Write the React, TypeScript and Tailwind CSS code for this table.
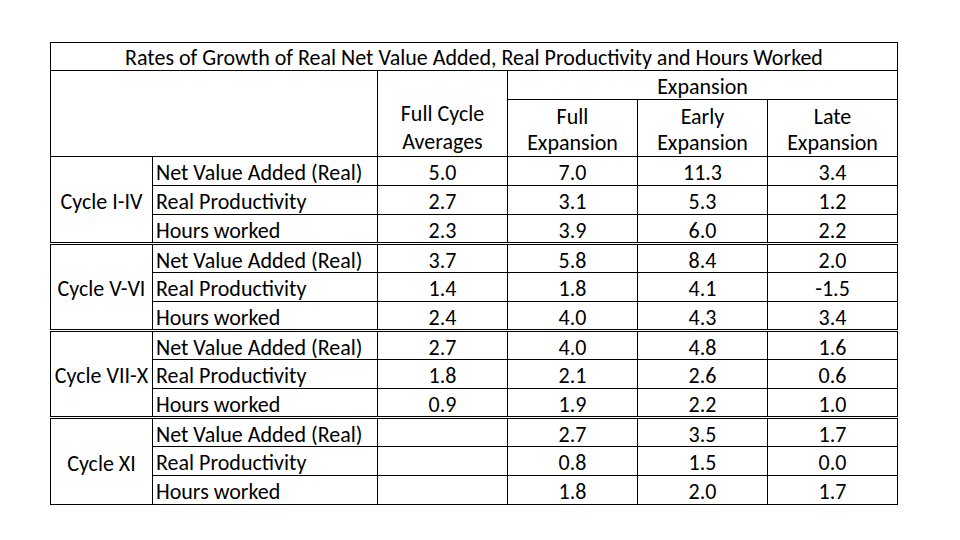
const groups = [
  {
    label: 'Cycle I-IV',
    rows: [
      ['Net Value Added (Real)', '5.0', '7.0', '11.3', '3.4'],
      ['Real Productivity', '2.7', '3.1', '5.3', '1.2'],
      ['Hours worked', '2.3', '3.9', '6.0', '2.2'],
    ],
  },
  {
    label: 'Cycle V-VI',
    rows: [
      ['Net Value Added (Real)', '3.7', '5.8', '8.4', '2.0'],
      ['Real Productivity', '1.4', '1.8', '4.1', '-1.5'],
      ['Hours worked', '2.4', '4.0', '4.3', '3.4'],
    ],
  },
  {
    label: 'Cycle VII-X',
    rows: [
      ['Net Value Added (Real)', '2.7', '4.0', '4.8', '1.6'],
      ['Real Productivity', '1.8', '2.1', '2.6', '0.6'],
      ['Hours worked', '0.9', '1.9', '2.2', '1.0'],
    ],
  },
  {
    label: 'Cycle XI',
    rows: [
      ['Net Value Added (Real)', '', '2.7', '3.5', '1.7'],
      ['Real Productivity', '', '0.8', '1.5', '0.0'],
      ['Hours worked', '', '1.8', '2.0', '1.7'],
    ],
  },
];

// double rule under the last row of every group except the final one
const DOUBLE = 'border border-black border-b-[3px] border-double';
const SINGLE = 'border border-black';

export default function App() {
  return (
    <div
      className="w-[960px] h-[540px] bg-white pt-[42px] pl-[50px] text-black"
      style={{ fontFamily: 'Carlito, Calibri, Lato, "Liberation Sans", sans-serif' }}
    >
      <table className="table-fixed border-collapse text-[22px] leading-none">
        <colgroup>
          <col className="w-[102px]" />
          <col className="w-[225px]" />
          <col className="w-[130px]" />
          <col className="w-[130px]" />
          <col className="w-[130px]" />
          <col className="w-[130px]" />
        </colgroup>
        <thead>
          <tr className="h-[28px]">
            <th colSpan={6} className="border border-black font-normal text-center pt-[3px]">
              Rates of Growth of Real Net Value Added, Real Productivity and Hours Worked
            </th>
          </tr>
          <tr className="h-[29px]">
            <th colSpan={2} rowSpan={2} className="border border-black font-normal" />
            <th rowSpan={2} className="border border-black font-normal align-bottom leading-[28px]">
              Full Cycle
              <br />
              Averages
            </th>
            <th colSpan={3} className="border border-black font-normal pt-[3px]">
              Expansion
            </th>
          </tr>
          <tr className="h-[56px]">
            <th className="border border-black font-normal leading-[26px] pt-[4px]">
              Full
              <br />
              Expansion
            </th>
            <th className="border border-black font-normal leading-[26px] pt-[4px]">
              Early
              <br />
              Expansion
            </th>
            <th className="border border-black font-normal leading-[26px] pt-[4px]">
              Late
              <br />
              Expansion
            </th>
          </tr>
        </thead>
        <tbody>
          {groups.map((g, gi) =>
            g.rows.map((r, ri) => {
              const notLastGroup = gi < groups.length - 1;
              const cell = ri === 2 && notLastGroup ? DOUBLE : SINGLE;
              return (
                <tr key={`${gi}-${ri}`} className="h-[29px]">
                  {ri === 0 && (
                    <td
                      rowSpan={3}
                      className={`${notLastGroup ? DOUBLE : SINGLE} text-center whitespace-nowrap pt-[4px]`}
                    >
                      {g.label}
                    </td>
                  )}
                  <td className={`${cell} pl-[3px] pt-[4px] whitespace-nowrap`}>{r[0]}</td>
                  <td className={`${cell} pt-[4px] text-center`}>{r[1]}</td>
                  <td className={`${cell} pt-[4px] text-center`}>{r[2]}</td>
                  <td className={`${cell} pt-[4px] text-center`}>{r[3]}</td>
                  <td className={`${cell} pt-[4px] text-center`}>{r[4]}</td>
                </tr>
              );
            })
          )}
        </tbody>
      </table>
    </div>
  );
}
